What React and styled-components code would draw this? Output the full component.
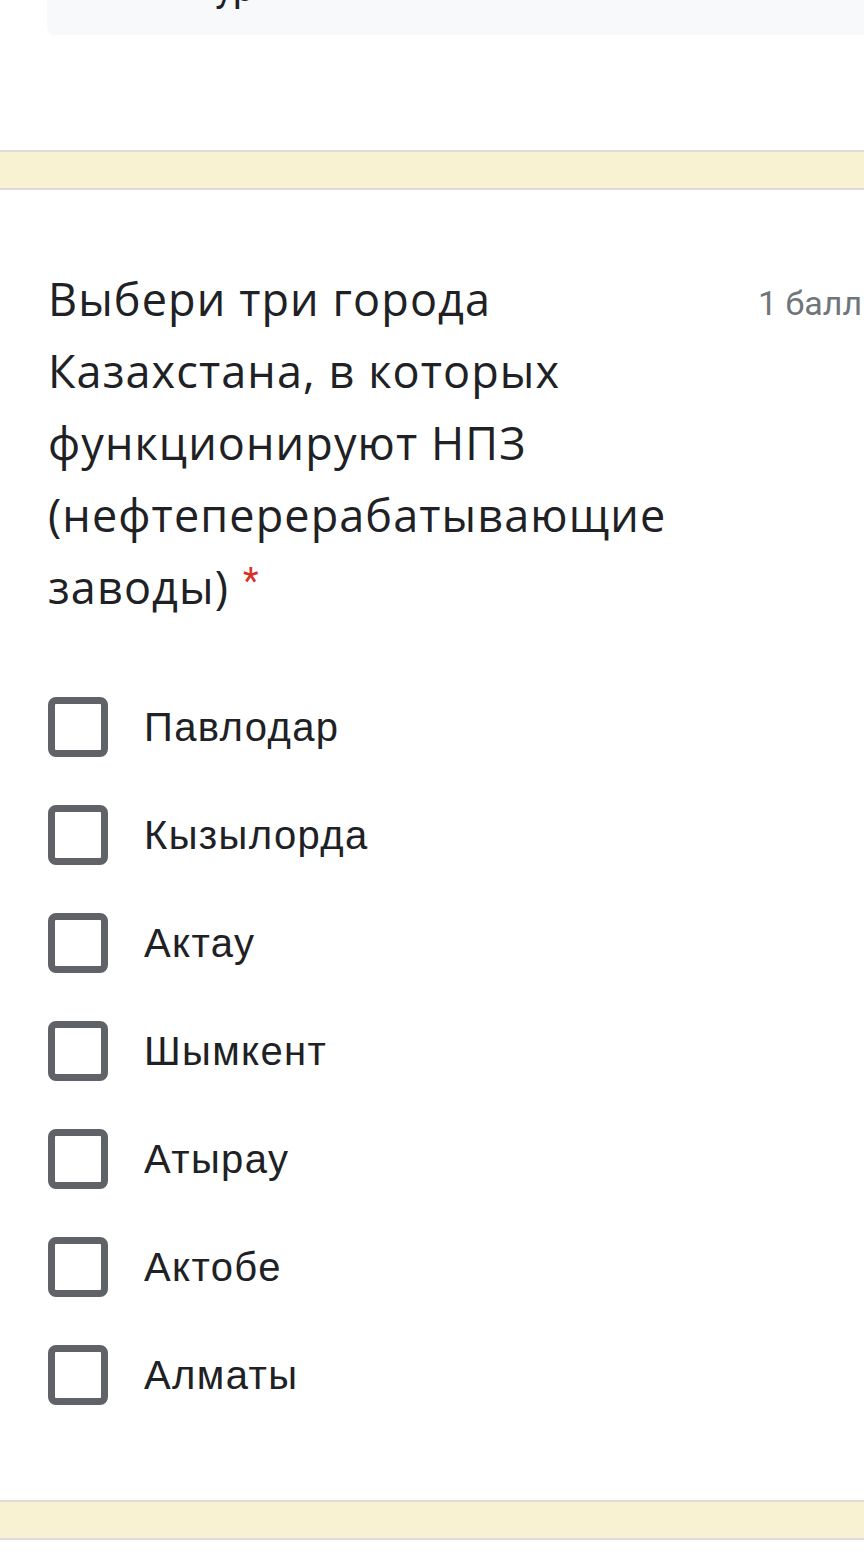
import React from "react";
import styled, { createGlobalStyle } from "styled-components";

const GlobalStyle = createGlobalStyle`
  body {
    margin: 0;
    background: #fff;
    font-family: Roboto, "Noto Sans", sans-serif;
    color: #202124;
  }
`;

const Page = styled.div`
  width: 864px;
  min-height: 1564px;
  overflow: hidden;
  background: #fff;
`;

// the tail of the previous question's answer box, cut off by the top of the screen
const PrevAnswer = styled.div`
  margin-left: 47px;
  height: 35px;
  background: #f8f9fa;
  border-bottom-left-radius: 8px;
  overflow: hidden;
  display: flex;
`;

const PrevAnswerText = styled.div`
  margin: -40px 0 0 168px;
  font-size: 38px;
  line-height: 56px;
  color: #202124;
`;

const Band = styled.div`
  height: 36px;
  margin-top: ${(p) => p.$top}px;
  background: #f8f1d2;
  border-top: 2px solid #dcdcd8;
  border-bottom: 2px solid #dadce0;
`;

const QuestionCard = styled.section`
  padding: 73px 0 0 48px;
`;

const Header = styled.div`
  display: flex;
  align-items: flex-start;
`;

const Title = styled.h2`
  margin: 0;
  width: 670px;
  font-family: "Open Sans", Roboto, sans-serif;
  font-size: 45px;
  font-weight: 400;
  line-height: 72px;
  letter-spacing: 1.1px;
  color: #202124;
`;

const Required = styled.span`
  display: inline-block;
  vertical-align: top;
  margin-left: 14px;
  font-family: Roboto, sans-serif;
  font-size: 36px;
  line-height: 60px;
  letter-spacing: 0;
  color: #d93025;
`;

const Points = styled.div`
  margin-left: 40px;
  padding-top: 20px;
  font-size: 34px;
  line-height: 40px;
  color: #70757a;
  white-space: nowrap;
`;

const Options = styled.div`
  display: flex;
  flex-direction: column;
  gap: 48px;
  margin-top: 74px;
`;

const Option = styled.label`
  display: flex;
  align-items: center;
  height: 60px;
`;

const Box = styled.span`
  box-sizing: border-box;
  width: 60px;
  height: 60px;
  border: 7px solid #5f6368;
  border-radius: 8px;
  flex-shrink: 0;
`;

const OptionLabel = styled.span`
  margin-left: 36px;
  font-family: "Liberation Sans", Arial, sans-serif;
  font-size: 40px;
  letter-spacing: 1.4px;
  color: #202124;
`;

const cities = [
  "Павлодар",
  "Кызылорда",
  "Актау",
  "Шымкент",
  "Атырау",
  "Актобе",
  "Алматы",
];

const App = () => {
  return (
    <Page>
      <GlobalStyle />
      <PrevAnswer>
        <PrevAnswerText>ур</PrevAnswerText>
      </PrevAnswer>
      <Band $top={115} />
      <QuestionCard>
        <Header>
          <Title>
            Выбери три города Казахстана, в которых функционируют НПЗ
            (нефтеперерабатывающие заводы)
            <Required>*</Required>
          </Title>
          <Points>1 балл</Points>
        </Header>
        <Options>
          {cities.map((city) => (
            <Option key={city}>
              <Box />
              <OptionLabel>{city}</OptionLabel>
            </Option>
          ))}
        </Options>
      </QuestionCard>
      <Band $top={95} />
    </Page>
  );
};

export default App;
